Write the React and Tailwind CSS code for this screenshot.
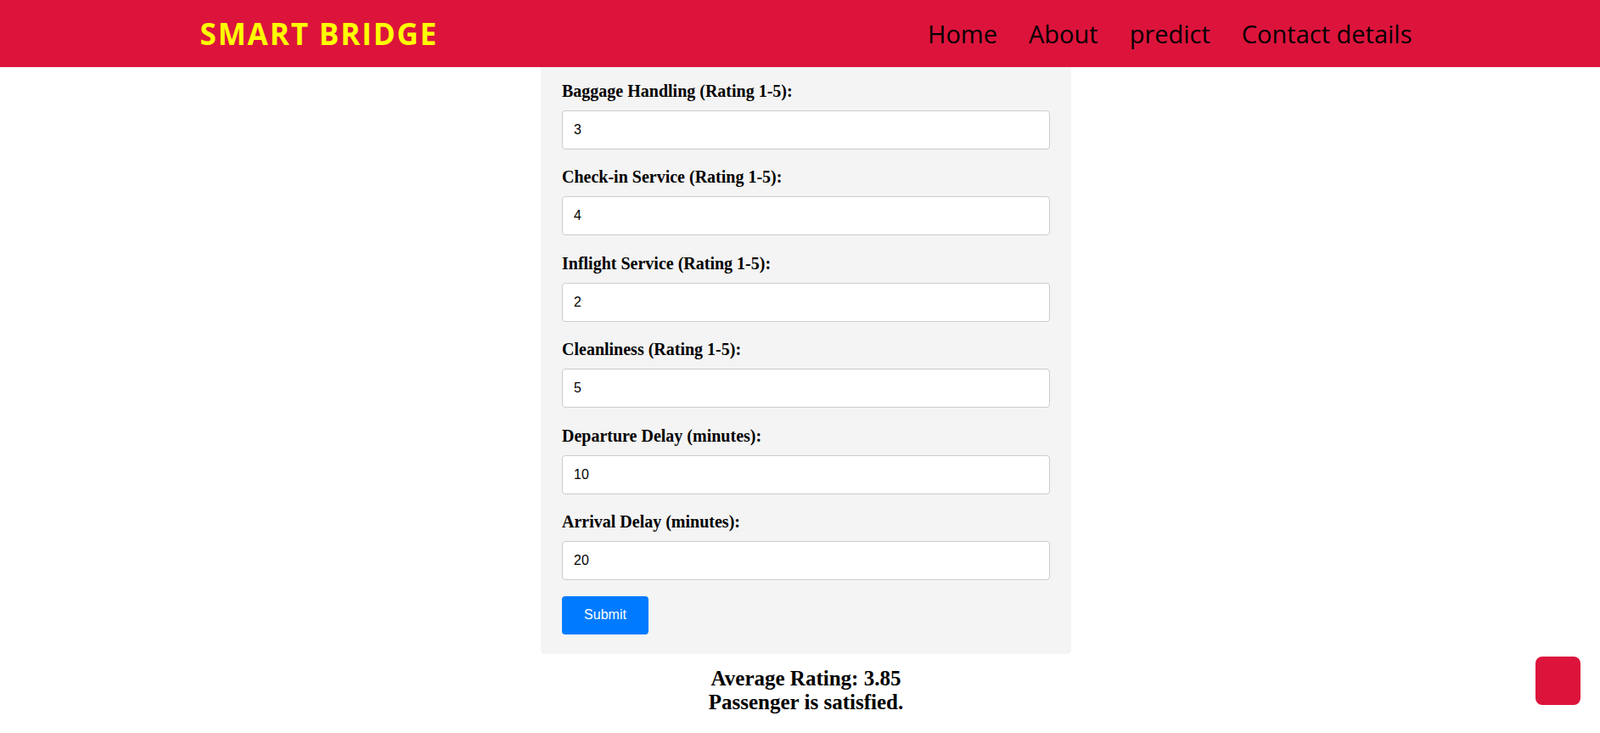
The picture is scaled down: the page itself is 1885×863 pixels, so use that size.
import React from "react";

const fields = [
  { label: "Baggage Handling (Rating 1-5):", value: "3" },
  { label: "Check-in Service (Rating 1-5):", value: "4" },
  { label: "Inflight Service (Rating 1-5):", value: "2" },
  { label: "Cleanliness (Rating 1-5):", value: "5" },
  { label: "Departure Delay (minutes):", value: "10" },
  { label: "Arrival Delay (minutes):", value: "20" },
];

export default function App() {
  return (
    <div className="min-h-[863px] bg-white">
      <header className="h-[79px] bg-[#dc143c] pl-[14px]">
        <div className="mx-auto flex h-full w-[1428px] items-center justify-between">
          <div className="font-['Open_Sans',sans-serif] text-[35px] font-bold tracking-[1.9px] text-[#ffff00] leading-none">
            SMART BRIDGE
          </div>
          <nav className="flex items-center gap-[37px] font-['Open_Sans',sans-serif] text-[29px] font-medium leading-none text-black">
            <a href="#">Home</a>
            <a href="#">About</a>
            <a href="#">predict</a>
            <a href="#">Contact details</a>
          </nav>
        </div>
      </header>

      <main className="pl-[14px]">
        <form
          className="mx-auto w-[625px] rounded-b-[5px] bg-[#f4f4f4] px-[25px] pt-[17px] pb-[23px]"
          onSubmit={(e) => e.preventDefault()}
        >
          <div className="flex flex-col gap-[21.4px]">
            {fields.map((f) => (
              <div key={f.label}>
                <label className="mb-[11px] block font-['Liberation_Serif','Times_New_Roman',serif] text-[20px] font-bold leading-[23px] text-black">
                  {f.label}
                </label>
                <input
                  type="text"
                  defaultValue={f.value}
                  className="block h-[46px] w-full rounded-[4px] border border-[#cccccc] bg-white px-[13px] font-['Liberation_Sans',Arial,sans-serif] text-[16px] text-black outline-none"
                />
              </div>
            ))}
          </div>
          <button
            type="submit"
            className="mt-[19px] flex h-[45px] w-[102px] items-center justify-center rounded-[4px] bg-[#007bff] font-['Liberation_Sans',Arial,sans-serif] text-[16px] text-white"
          >
            Submit
          </button>
        </form>

        <div className="mt-[15px] text-center font-['Liberation_Serif','Times_New_Roman',serif] text-[25px] font-bold leading-[27.6px] text-black">
          <div>Average Rating: 3.85</div>
          <div>Passenger is satisfied.</div>
        </div>
      </main>

      <div className="fixed right-[23px] bottom-[33px] h-[57px] w-[53px] rounded-[8px] bg-[#dc143c]" />
    </div>
  );
}
